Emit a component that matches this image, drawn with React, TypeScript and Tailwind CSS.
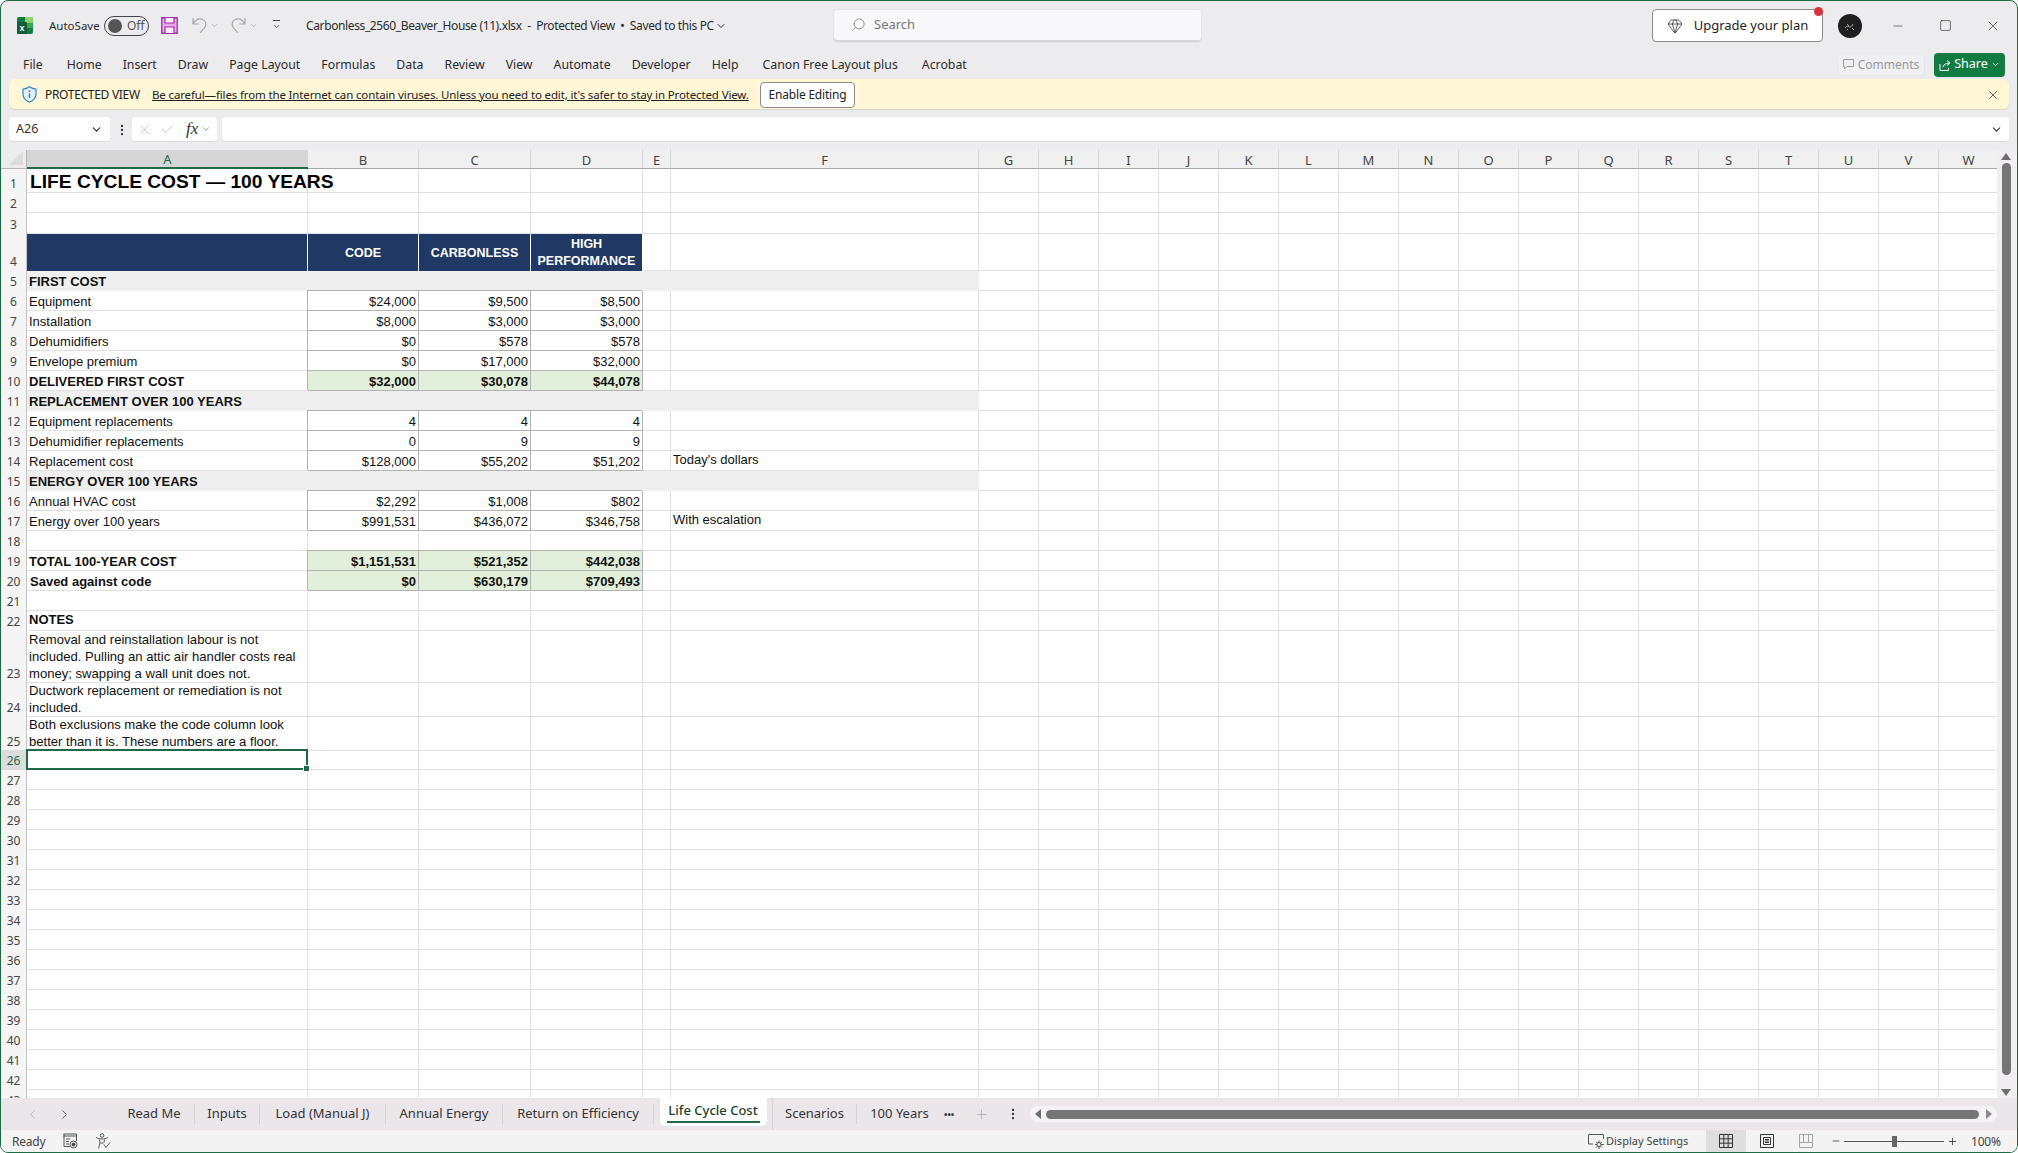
import React from "react";
import {
  Check,
  ChevronDown,
  ChevronLeft,
  ChevronRight,
  EllipsisVertical,
  Gem,
  Minus,
  Plus,
  Search,
  Square,
  X,
} from "lucide-react";

const GRID =
  "grid w-max grid-cols-[26px_281px_111px_112px_112px_28px_308px_repeat(17,60px)]";
const LINE = "border-r border-b border-[#e1e1e1]";
const BOX =
  "border-r border-b border-[#b2b2b2] shadow-[-1px_-1px_0_0_#b2b2b2] relative";
const VALUE = "flex items-center justify-end pr-[2px] pt-px";
const LETTERS = "ABCDEFGHIJKLMNOPQRSTUVW".split("");
const EXTRA = LETTERS.slice(6);

type Row = {
  n: number;
  h?: string;
  kind?: "title" | "head" | "section" | "box" | "green";
  a?: string;
  vals?: string[];
  f?: string;
  bold?: boolean;
};

const rows: Row[] = [
  { n: 1, h: "h-[24px]", kind: "title", a: "LIFE CYCLE COST — 100 YEARS" },
  { n: 2 },
  { n: 3, h: "h-[21px]" },
  { n: 4, h: "h-[37px]", kind: "head" },
  { n: 5, kind: "section", a: "FIRST COST" },
  { n: 6, kind: "box", a: "Equipment", vals: ["$24,000", "$9,500", "$8,500"] },
  { n: 7, kind: "box", a: "Installation", vals: ["$8,000", "$3,000", "$3,000"] },
  { n: 8, kind: "box", a: "Dehumidifiers", vals: ["$0", "$578", "$578"] },
  { n: 9, kind: "box", a: "Envelope premium", vals: ["$0", "$17,000", "$32,000"] },
  { n: 10, kind: "green", a: "DELIVERED FIRST COST", vals: ["$32,000", "$30,078", "$44,078"] },
  { n: 11, kind: "section", a: "REPLACEMENT OVER 100 YEARS" },
  { n: 12, kind: "box", a: "Equipment replacements", vals: ["4", "4", "4"] },
  { n: 13, kind: "box", a: "Dehumidifier replacements", vals: ["0", "9", "9"] },
  { n: 14, kind: "box", a: "Replacement cost", vals: ["$128,000", "$55,202", "$51,202"], f: "Today's dollars" },
  { n: 15, kind: "section", a: "ENERGY OVER 100 YEARS" },
  { n: 16, kind: "box", a: "Annual HVAC cost", vals: ["$2,292", "$1,008", "$802"] },
  { n: 17, kind: "box", a: "Energy over 100 years", vals: ["$991,531", "$436,072", "$346,758"], f: "With escalation" },
  { n: 18 },
  { n: 19, kind: "green", a: "TOTAL 100-YEAR COST", vals: ["$1,151,531", "$521,352", "$442,038"] },
  { n: 20, kind: "green", a: "Saved against code", vals: ["$0", "$630,179", "$709,493"] },
  { n: 21 },
  { n: 22, a: "NOTES", bold: true },
  { n: 23, h: "h-[51px]", a: "Removal and reinstallation labour is not included. Pulling an attic air handler costs real money; swapping a wall unit does not." },
  { n: 24, h: "h-[34px]", a: "Ductwork replacement or remediation is not included." },
  { n: 25, h: "h-[34px]", a: "Both exclusions make the code column look better than it is. These numbers are a floor." },
  { n: 26 },
  ...Array.from({ length: 17 }, (_, i) => ({ n: 27 + i })),
];

const menus = ["File", "Home", "Insert", "Draw", "Page Layout", "Formulas", "Data", "Review", "View", "Automate", "Developer", "Help", "Canon Free Layout plus", "Acrobat"];

const tabs = [
  { name: "Read Me", w: "w-[81px]" },
  { name: "Inputs", w: "w-[65px]" },
  { name: "Load (Manual J)", w: "w-[126px]" },
  { name: "Annual Energy", w: "w-[117px]" },
  { name: "Return on Efficiency", w: "w-[151px]" },
  { name: "Life Cycle Cost", w: "w-[119px]", active: true },
  { name: "Scenarios", w: "w-[84px]" },
  { name: "100 Years", w: "w-[85px]" },
];

const ExcelLogo = () => (
  <svg width="16" height="17" viewBox="0 0 16 17">
    <rect x="0" y="0" width="16" height="17" rx="2" fill="#107c41" />
    <rect x="8" y="0" width="8" height="6" rx="1" fill="#8fd16f" />
    <rect x="8" y="6" width="8" height="5" fill="#33a852" />
    <rect x="0" y="5" width="10" height="12" rx="1" fill="#185c37" />
    <text x="2.5" y="13.5" fontSize="9" fontWeight="700" fill="#fff" fontFamily="Liberation Sans">x</text>
  </svg>
);

const SaveIcon = () => (
  <svg width="17" height="17" viewBox="0 0 17 17">
    <path d="M.75.75h15.5v15.5H.75z" fill="#e6a8ea" stroke="#a32cab" strokeWidth="1.3" />
    <path d="M4 1v5h9V1M4 16v-6h9v6" fill="#fbeefc" stroke="#a32cab" strokeWidth="1.2" />
  </svg>
);

const UndoIcon = ({ flip }: { flip?: boolean }) => (
  <svg width="15" height="17" viewBox="0 0 15 17" className={flip ? "-scale-x-100" : ""} fill="none" stroke="#a9a9ad" strokeWidth="1.2">
    <path d="M1 1v6h6M1.2 7C3 3 5.5 1.8 8 1.8c3.2 0 5.8 2.4 5.8 5.4 0 3.6-3 5.4-5.6 8.6" />
  </svg>
);

const ShieldIcon = () => (
  <svg width="15" height="17" viewBox="0 0 15 17" fill="none">
    <path d="M7.5.8c2 1.5 4 2.2 6.5 2.4v5c0 3.7-2.5 6.2-6.5 8-4-1.8-6.5-4.3-6.5-8v-5C3.500 3 5.500 2.300 7.500.8z" stroke="#2f86c9" strokeWidth="1.2" fill="#e4f1fa" />
    <path d="M7.500 7.500v4.500" stroke="#2f86c9" strokeWidth="1.500" />
    <circle cx="7.500" cy="5.300" r="1" fill="#2f86c9" />
  </svg>
);

const Avatar = () => (
  <svg width="24" height="24" viewBox="0 0 24 24" fill="none">
    <circle cx="12" cy="12" r="12" fill="#1f1f1f" />
    <path d="M7 14c2-3 4-1 5-1s2-1 3-3M10 15l-1 1M14 14l2 2M9 10l2 2" stroke="#b9b9b9" strokeWidth="0.9" />
  </svg>
);

const SheetStatusIcon = () => (
  <svg width="15" height="16" viewBox="0 0 15 16" fill="none" stroke="#444" strokeWidth="0.9">
    <path d="M.5 1h13M.5 3h13M1 1v12.500h6M13.500 1v7M3 6h4M3 8.500h3M3 11h3" />
    <circle cx="10.500" cy="11.500" r="3.500" />
    <circle cx="10.500" cy="11.500" r="1.500" fill="#444" />
  </svg>
);

const AccessIcon = () => (
  <svg width="16" height="17" viewBox="0 0 16 17" fill="none" stroke="#444" strokeWidth="0.9">
    <circle cx="7" cy="2.500" r="1.800" />
    <path d="M1 4.500c2 1 3.500 1.500 6 1.500s4-.5 6-1.500M4.500 6.500 5 10l-1.500 5.500M9.500 6.500 9 9.500M5.500 10h3M9 11.500l2 3 4-5" />
  </svg>
);

const DisplayIcon = () => (
  <svg width="17" height="17" viewBox="0 0 17 17" fill="none" stroke="#444" strokeWidth="0.9">
    <path d="M5 11H.5V1.500h15V6" />
    <circle cx="11" cy="11.500" r="2" />
    <path d="M11 7.500v2M11 13.500v2.500M7 11.500h2M13 11.500h3M8 9l1.500 1M12.500 13l1.500 1.500M14 9l-1.500 1M9.500 13 8 14.500" />
  </svg>
);

const NormalViewIcon = () => (
  <svg width="14" height="14" viewBox="0 0 14 14" fill="none" stroke="#333" strokeWidth="1">
    <path d="M.5.5h13v13H.5zM4.830.5v13M9.170.5v13M.5 4.830h13M.5 9.170h13" />
  </svg>
);

const PageViewIcon = () => (
  <svg width="14" height="14" viewBox="0 0 14 14" fill="none" stroke="#333" strokeWidth="1">
    <path d="M.5.5h13v13H.5zM3.500 3.500h7v7h-7zM5 5.500h4M5 7h4M5 8.500h4" />
  </svg>
);

const BreakViewIcon = () => (
  <svg width="14" height="14" viewBox="0 0 14 14" fill="none" stroke="#a5a5a5" strokeWidth="1">
    <path d="M.5.5h13v13H.5zM.5 8.500h4v-8M9.500.5v8h4M4.500 8.500h5" />
  </svg>
);

const Triangle = ({ className }: { className: string }) => <span className={`inline-block ${className}`} />;

function SheetRow({ row }: { row: Row }) {
  const selected = row.n === 26;
  const section = row.kind === "section";
  const aClass = section ? "bg-[#efefef] border-b border-[#efefef]" : LINE;
  const multi = row.h === "h-[51px]" || row.h === "h-[34px]";
  return (
    <div className={`${GRID} ${row.h ?? "h-5"} text-[13px] leading-[17px] text-[#111]`}>
      <div
        className={`flex items-end justify-center text-[12px] leading-[18px] font-['Noto_Sans',sans-serif] ${
          selected ? "bg-[#dcdcdc] text-[#1f6b45]" : "bg-[#f5f5f5] text-[#444]"
        } border-r border-[#c4c4c4]`}
      >
        {row.n}
      </div>

      {/* column A */}
      {row.kind === "head" ? (
        <div className="bg-[#1f3864] border-r border-white" />
      ) : (
        <div
          className={`relative min-w-0 pl-[2px] ${aClass} ${
            multi
              ? "whitespace-normal pr-[2px] text-[13.1px]"
              : row.bold
                ? "flex items-start whitespace-nowrap"
                : "flex items-center whitespace-nowrap pt-px"
          } ${row.kind === "title" ? "pl-[3px] text-[19.2px] font-bold text-black" : ""} ${
            section || row.kind === "green" || row.bold ? "font-bold" : ""
          } ${row.n === 20 ? "pl-[3px]" : ""} ${selected ? "z-10" : ""}`}
        >
          {row.a}
          {selected && (
            <div className="absolute -left-px -top-px w-[282px] h-[21px] border-2 border-[#1f6b45]">
              <span className="absolute -right-[4px] -bottom-[4px] w-[7px] h-[7px] bg-[#1f6b45] border border-white" />
            </div>
          )}
        </div>
      )}

      {/* columns B to D */}
      {["CODE", "CARBONLESS", "HIGH PERFORMANCE"].map((head, i) => {
        if (row.kind === "head")
          return (
            <div key={i} className="flex items-center justify-center text-center px-1 pt-px bg-[#1f3864] border-r border-white text-white font-bold text-[12.5px]">
              {head}
            </div>
          );
        if (section) return <div key={i} className="bg-[#efefef]" />;
        if (row.kind === "box")
          return <div key={i} className={`${VALUE} ${BOX} bg-white`}>{row.vals?.[i]}</div>;
        if (row.kind === "green")
          return <div key={i} className={`${VALUE} ${BOX} bg-[#e2efda] font-bold`}>{row.vals?.[i]}</div>;
        return <div key={i} className={LINE} />;
      })}

      {/* columns E and F */}
      {section ? <div className="bg-[#efefef]" /> : <div className={LINE} />}
      {section ? (
        <div className="bg-[#efefef]" />
      ) : (
        <div className={`flex items-start pl-[2px] whitespace-nowrap ${LINE}`}>{row.f}</div>
      )}

      {EXTRA.map((c) => (
        <div key={c} className={LINE} />
      ))}
    </div>
  );
}

function Sheet() {
  return (
    <div className="flex-1 min-h-0 flex bg-white">
      <div className="flex-1 min-w-0 overflow-hidden font-['Liberation_Sans',Arial,sans-serif]">
        <div className={`${GRID} h-[19px] grid-rows-[19px] text-[13px] leading-[15px] font-['Noto_Sans',sans-serif] text-[#444]`}>
          <div className="relative bg-[#ececec] border-r border-b border-[#b5b5b5] overflow-hidden">
            <span className="absolute right-[3px] bottom-[3px] w-0 h-0 border-l-[14px] border-l-transparent border-b-[14px] border-b-[#dcdcdc]" />
          </div>
          {LETTERS.map((c) =>
            c === "A" ? (
              <div key={c} className="flex items-center justify-center pt-[2px] bg-[#d6d6d6] text-[#1f6b45] border-b-2 border-[#1f6b45]">
                {c}
              </div>
            ) : (
              <div key={c} className="flex items-center justify-center pt-[2px] bg-[#f0f0f0] border-r border-b border-r-[#d4d4d4] border-b-[#a8a8a8]">
                {c}
              </div>
            ),
          )}
        </div>
        {rows.map((row) => (
          <SheetRow key={row.n} row={row} />
        ))}
      </div>
      <div className="w-[20px] shrink-0 flex flex-col items-center bg-[#f0eef1] pt-[3px] pr-[2px]">
        <Triangle className="w-0 h-0 border-x-[5px] border-x-transparent border-b-[7px] border-b-[#6e6e6e]" />
        <div className="w-[9px] flex-1 mt-[3px] mb-[14px] rounded-full bg-[#757575]" />
        <Triangle className="w-0 h-0 border-x-[5px] border-x-transparent border-t-[7px] border-t-[#6e6e6e] mb-[2px]" />
      </div>
    </div>
  );
}

export default function App() {
  return (
    <div className="h-screen w-full bg-white">
      <div className="h-full flex flex-col overflow-hidden rounded-lg border border-[#1f6b45] bg-[#ecebee] font-['Noto_Sans',sans-serif] text-[#2b2b2b]">
        {/* title bar */}
        <div className="h-[49px] shrink-0 flex items-center text-[12px]">
          <div className="ml-[16px]"><ExcelLogo /></div>
          <span className="ml-[16px] w-[50px] whitespace-nowrap text-[11.5px]">AutoSave</span>
          <div className="ml-[5px] w-[45px] h-[20px] rounded-full border border-[#444] flex items-center pl-[3px] gap-[5px] text-[#555]">
            <span className="w-[14px] h-[14px] rounded-full bg-[#555]" />
            <span>Off</span>
          </div>
          <div className="ml-[12px]"><SaveIcon /></div>
          <div className="ml-[14px]"><UndoIcon /></div>
          <ChevronDown size={9} className="ml-[3px] text-[#a9a9ad]" />
          <div className="ml-[12px]"><UndoIcon flip /></div>
          <ChevronDown size={9} className="ml-[3px] text-[#a9a9ad]" />
          <div className="ml-[14px] flex flex-col items-center gap-[1px] text-[#444]">
            <span className="w-[7px] h-px bg-[#444]" />
            <ChevronDown size={9} />
          </div>
          <span className="ml-[25px] whitespace-nowrap w-[409px] tracking-[-0.38px]">
            Carbonless_2560_Beaver_House (11).xlsx&nbsp; - &nbsp;Protected View&nbsp; •&nbsp; Saved to this PC
          </span>
          <ChevronDown size={12} />
          <div className="ml-[107px] w-[367px] h-[32px] flex items-center pl-[17px] gap-[8px] rounded bg-[#f8f7f9] border-b-2 border-[#d5d4d7] shadow-[0_0_0_1px_#e4e3e6] text-[#777] text-[13px]">
            <Search size={15} className="-scale-x-100" strokeWidth={1.2} />
            Search
          </div>
          <div className="ml-[451px] relative w-[171px] h-[33px] flex items-center justify-center gap-[11px] rounded bg-white border border-[#8b8b8b] text-[13px] text-[#222]">
            <Gem size={16} strokeWidth={1.1} />
            Upgrade your plan
            <span className="absolute -top-[3px] right-[-1px] w-[9px] h-[9px] rounded-full bg-[#d8343f]" />
          </div>
          <div className="ml-[15px]"><Avatar /></div>
          <Minus size={14} strokeWidth={1} className="ml-[29px]" />
          <Square size={13} strokeWidth={1.2} className="ml-[34px]" />
          <X size={16} strokeWidth={1} className="ml-[33px]" />
        </div>

        {/* menu row */}
        <div className="h-[29px] shrink-0 flex items-center pl-[22px] pr-[12px] pt-[2px] text-[12.3px]">
          <div className="flex gap-[21px] whitespace-nowrap">
            {menus.map((m) => (
              <span key={m} className={m === "Canon Free Layout plus" ? "mx-[3px]" : "first:mr-[3px]"}>{m}</span>
            ))}
          </div>
          <div className="ml-auto -mt-[2px] w-[88px] h-[22px] flex items-center justify-center gap-[4px] rounded-sm bg-[#f0eff2] border border-[#e6e5e8] text-[#9a9a9a] text-[12px]">
            <svg width="11" height="11" viewBox="0 0 11 11" fill="none" stroke="#9a9a9a">
              <path d="M.5.500h10v7H4L1.500 10V7.500H.5z" />
            </svg>
            Comments
          </div>
          <div className="ml-[9px] -mt-[2px] w-[71px] h-[24px] flex items-center justify-center gap-[3px] rounded-sm bg-[#107c41] text-white text-[12.5px]">
            <svg width="12" height="12" viewBox="0 0 12 12" fill="none" stroke="#fff">
              <path d="M8 1.500 11 4 8 6.500M11 4C7 4 4.500 5.500 4 8M1 5v6.500h8.500V9" />
            </svg>
            Share
            <ChevronDown size={9} />
          </div>
        </div>

        {/* protected view bar */}
        <div className="h-[30px] shrink-0 mx-[8px] pt-px flex items-center rounded-md bg-[#fff7d6] shadow-[0_1px_1px_#d8d4c0] text-[12px] text-[#222]">
          <div className="ml-[13px]"><ShieldIcon /></div>
          <span className="ml-[8px] w-[97px] whitespace-nowrap tracking-[-0.3px]">PROTECTED VIEW</span>
          <span className="ml-[10px] w-[595px] whitespace-nowrap underline text-[11.5px] tracking-[-0.14px]">
            Be careful—files from the Internet can contain viruses. Unless you need to edit, it's safer to stay in Protected View.
          </span>
          <div className="ml-[13px] w-[95px] h-[26px] flex items-center justify-center rounded-sm bg-white border border-[#8b8b8b] tracking-[-0.2px]">
            Enable Editing
          </div>
          <X size={14} strokeWidth={1.2} className="ml-auto mr-[9px]" />
        </div>

        {/* formula bar */}
        <div className="h-[25px] shrink-0 mt-[8px] mx-[8px] flex items-center text-[#333]">
          <div className="w-[101px] h-full flex items-center justify-between pl-[7px] pr-[7px] pt-px rounded bg-white border-b border-[#dcdbde] text-[12.5px]">
            A26
            <ChevronDown size={13} />
          </div>
          <EllipsisVertical size={14} className="ml-[5px] text-[#333]" />
          <div className="ml-[3px] w-[85px] h-full flex items-center pl-[5px] rounded bg-white border-b border-[#dcdbde]">
            <X size={15} strokeWidth={1} className="text-[#aaa]" />
            <Check size={15} strokeWidth={1} className="ml-[8px] text-[#aaa]" />
            <span className="ml-[11px] italic font-['Liberation_Serif',serif] text-[17px] text-[#333]">fx</span>
            <ChevronDown size={10} className="ml-[3px] text-[#888]" />
          </div>
          <div className="ml-[5px] flex-1 h-full flex items-center justify-end pr-[6px] rounded bg-white border-b border-[#dcdbde]">
            <ChevronDown size={13} />
          </div>
        </div>
        <div className="h-[8px] shrink-0" />

        <Sheet />

        {/* sheet tabs */}
        <div className="h-[32px] shrink-0 flex items-center bg-[#ebe6ea] text-[13px] text-[#333]">
          <ChevronLeft size={15} strokeWidth={1} className="ml-[24px] text-[#999]" />
          <ChevronRight size={15} strokeWidth={1.2} className="ml-[17px]" />
          <div className="ml-[42px] flex items-center h-full">
            {tabs.map((t) =>
              t.active ? (
                <div key={t.name} className={`${t.w} h-full flex justify-center border-r border-[#d5d0d4]`}>
                  <div className="w-[107px] h-[29px] -mt-[1px] bg-white rounded-b-md flex flex-col items-center pt-[5px] text-[#1c3f2d] font-medium whitespace-nowrap">
                    <span className="leading-[17px]">{t.name}</span>
                    <span className="w-[93px] h-[2px] bg-[#1f6b45] mt-[2px]" />
                  </div>
                </div>
              ) : (
                <div key={t.name} className={`${t.w} h-[20px] flex items-center justify-center whitespace-nowrap border-r border-[#d5d0d4] last:border-r-0`}>
                  {t.name}
                </div>
              ),
            )}
          </div>
          <span className="ml-[2px] w-[12px] text-[9px] font-bold leading-none">•••</span>
          <Plus size={15} strokeWidth={1} className="ml-[18px] text-[#999]" />
          <EllipsisVertical size={14} className="ml-[17px]" />
          <div className="ml-[10px] w-[967px] h-[16px] flex items-center rounded-full bg-[#f5f2f5] px-[5px]">
            <Triangle className="w-0 h-0 border-y-[5px] border-y-transparent border-r-[6px] border-r-[#6e6e6e]" />
            <div className="ml-[5px] flex-1 h-[9px] rounded-full bg-[#757575]" />
            <Triangle className="ml-[7px] w-0 h-0 border-y-[5px] border-y-transparent border-l-[6px] border-l-[#8a8a8a]" />
          </div>
        </div>

        {/* status bar */}
        <div className="h-[22px] shrink-0 flex items-center bg-[#f3f3f3] text-[12px] text-[#444]">
          <span className="ml-[11px] w-[31px] pt-px tracking-[-0.2px]">Ready</span>
          <div className="ml-[20px]"><SheetStatusIcon /></div>
          <div className="ml-[17px]"><AccessIcon /></div>
          <div className="ml-[1477px]"><DisplayIcon /></div>
          <span className="ml-[1px] w-[85px] pt-px whitespace-nowrap text-[11px]">Display Settings</span>
          <div className="ml-[15px] w-[40px] h-full flex items-center justify-center bg-[#dedede]"><NormalViewIcon /></div>
          <div className="ml-[14px]"><PageViewIcon /></div>
          <div className="ml-[25px]"><BreakViewIcon /></div>
          <Minus size={10} className="ml-[18px]" />
          <div className="ml-[3px] relative w-[100px] h-px bg-[#555]">
            <span className="absolute left-[48px] -top-[5px] w-[5px] h-[11px] bg-[#666]" />
          </div>
          <Plus size={11} className="ml-[3px]" />
          <span className="ml-[13px] pt-px whitespace-nowrap tracking-[-0.2px]">100%</span>
        </div>
      </div>
    </div>
  );
}
